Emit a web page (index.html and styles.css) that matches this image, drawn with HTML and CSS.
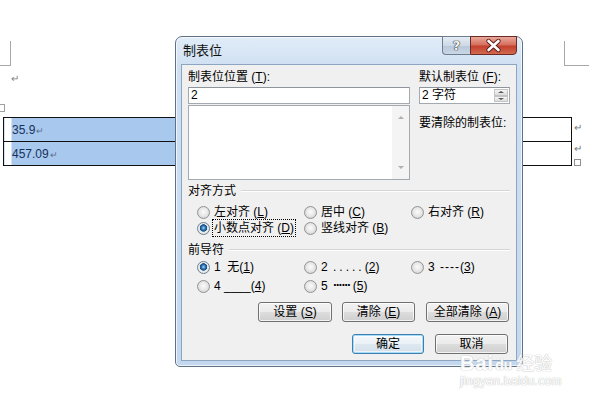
FILE: index.html
```html
<!DOCTYPE html>
<html lang="zh-CN">
<head>
<meta charset="UTF-8">
<title>制表位</title>
<link rel="stylesheet" href="styles.css">
</head>
<body>
<div class="screen">
  <!-- documento de fondo -->
  <div class="doc">
    <div class="marks">
      <span class="crop crop-left"></span>
      <span class="crop crop-right"></span>
    </div>
    <div class="para">↵</div>
    <div class="handle"></div>
    <div class="table-wrap">
      <table class="doc-table">
        <tr><td class="sel">35.9<i>↵</i></td><td></td></tr>
        <tr><td class="sel">457.09<i>↵</i></td><td></td></tr>
      </table>
      <div class="row-ends">
        <i>↵</i>
        <i>↵</i>
        <b class="resize"></b>
      </div>
    </div>
  </div>

  <!-- ventana de dialogo -->
  <div class="dialog">
    <div class="titlebar">
      <span class="title">制表位</span>
      <div class="caption-btns">
        <span class="btn-help">?</span>
        <span class="btn-close">
          <svg width="45" height="19" viewBox="0 0 45 19">
            <path d="M17.5 5 L27.5 14 M27.5 5 L17.5 14" stroke="#5a1d17" stroke-width="4.4" stroke-linecap="round"/>
            <path d="M17.5 5 L27.5 14 M27.5 5 L17.5 14" stroke="#fff" stroke-width="2.6" stroke-linecap="round"/>
          </svg>
        </span>
      </div>
    </div>
    <div class="client">
      <div class="top">
        <div class="col-left">
          <div class="label">制表位位置 (<u>T</u>):</div>
          <div class="input">2</div>
          <div class="listbox">
            <div class="scroll">
              <i class="arrow up"></i>
              <i class="arrow down"></i>
            </div>
          </div>
        </div>
        <div class="col-right">
          <div class="label">默认制表位 (<u>F</u>):</div>
          <div class="spin">
            <span class="spin-value">2 字符</span>
            <div class="spin-btns">
              <span><i class="arrow up"></i></span>
              <span><i class="arrow down"></i></span>
            </div>
          </div>
          <div class="label clear-label">要清除的制表位:</div>
        </div>
      </div>

      <div class="group">对齐方式</div>
      <div class="radios">
        <div class="radio">左对齐 (<u>L</u>)</div>
        <div class="radio">居中 (<u>C</u>)</div>
        <div class="radio">右对齐 (<u>R</u>)</div>
        <div class="radio on"><span class="focus">小数点对齐 (<u>D</u>)</span></div>
        <div class="radio">竖线对齐 (<u>B</u>)</div>
      </div>

      <div class="group group-leader">前导符</div>
      <div class="radios leaders">
        <div class="radio on">1&nbsp; 无(<u>1</u>)</div>
        <div class="radio">2 <span class="dots">.....</span>(<u>2</u>)</div>
        <div class="radio">3 <span class="dashes">----</span>(<u>3</u>)</div>
        <div class="radio">4 ____(<u>4</u>)</div>
        <div class="radio">5 <span class="mid">······</span>(<u>5</u>)</div>
      </div>

      <div class="btn-row">
        <button class="btn btn-set">设置 (<u>S</u>)</button>
        <button class="btn btn-clear">清除 (<u>E</u>)</button>
        <button class="btn btn-all">全部清除 (<u>A</u>)</button>
      </div>
      <div class="btn-row btn-row-ok">
        <button class="btn btn-ok">确定</button>
        <button class="btn btn-cancel">取消</button>
      </div>
    </div>
  </div>

  <!-- marca de agua -->
  <div class="watermark">
    <div class="wm-logo"><span class="wm-bai">Bai</span><span class="wm-du">du</span><span class="wm-cn">经验</span></div>
    <div class="wm-url">jingyan.baidu.com</div>
  </div>
</div>
</body>
</html>
```

FILE: styles.css
```css
body {
  margin: 0;
  background-color: #fff;
  font-family: 'Liberation Sans', 'Noto Sans CJK SC', sans-serif;
  font-size: 12px;
  color: #000;
}

.screen {
  position: relative;
  width: 600px;
  height: 400px;
  overflow: hidden;
  background-color: #fff;
}

/* ---- documento ---- */
.doc {
  padding-top: 41px;
}

.marks {
  display: flex;
  justify-content: space-between;
  padding-right: 11px;
}

.crop {
  height: 24px;
  border-bottom: 1px solid #a8a8a8;
}

.crop-left {
  width: 10px;
  border-right: 1px solid #a8a8a8;
}

.crop-right {
  width: 24px;
  border-left: 1px solid #a8a8a8;
}

.para {
  margin-top: 5px;
  padding-left: 11px;
  height: 16px;
  line-height: 16px;
  font-size: 10px;
  color: #808080;
}

.handle {
  margin-top: 17px;
  margin-left: -4px;
  width: 7px;
  height: 6px;
  border: 1px solid #a0a0a0;
}

.table-wrap {
  display: flex;
  margin-top: 5px;
  margin-left: 3px;
}

.doc-table {
  border-collapse: collapse;
  width: 569px;
}

.doc-table td {
  border: 1px solid #111;
  height: 20px;
  padding: 0;
}

.doc-table td.sel {
  width: 300px;
  padding-left: 8px;
  background: linear-gradient(to right, #fff 7px, #a8c8ee 7px);
  color: #16325c;
  font-size: 12px;
}

.doc-table td.sel i {
  font-style: normal;
  font-size: 9px;
  color: #5d6f8a;
  margin-left: 1px;
}

.row-ends {
  display: flex;
  flex-direction: column;
  padding-left: 2px;
}

.row-ends i {
  font-style: normal;
  font-size: 10px;
  color: #777;
  height: 21px;
  line-height: 21px;
}

.resize {
  width: 5px;
  height: 5px;
  border: 1px solid #909090;
}

/* ---- dialogo ---- */
.dialog {
  position: absolute;
  left: 175px;
  top: 36px;
  width: 348px;
  height: 331px;
  box-sizing: border-box;
  border: 1px solid #5f7185;
  border-radius: 7px 7px 5px 5px;
  background: linear-gradient(#e1ecf8 0, #cfe0f3 30px, #c3d8ef 100%);
  box-shadow: inset 0 0 0 1px rgba(255, 255, 255, 0.7);
  display: flex;
  flex-direction: column;
  padding: 0 5px 5px 5px;
}

.titlebar {
  height: 27px;
  display: flex;
  justify-content: space-between;
  align-items: flex-start;
}

.title {
  align-self: center;
  padding-left: 2px;
  line-height: 16px;
  margin-top: 1px;
  font-size: 13px;
  color: #111;
}

.caption-btns {
  display: flex;
  margin-top: -1px;
}

.btn-help {
  width: 28px;
  height: 19px;
  box-sizing: border-box;
  border: 1px solid #707d8c;
  border-right: none;
  border-radius: 0 0 0 4px;
  background: linear-gradient(#e4ecf5 0, #cdd9e6 50%, #b7c8da 51%, #c9d7e6 100%);
  text-align: center;
  font-family: 'DejaVu Sans', sans-serif;
  font-weight: bold;
  font-size: 13px;
  line-height: 18px;
  color: #f4f4f4;
  text-shadow: 0 0 1px #333, 0 0 1px #333, 0 0 1px #333;
}

.btn-close {
  width: 47px;
  height: 19px;
  box-sizing: border-box;
  border: 1px solid #6b2a22;
  border-radius: 0 0 4px 0;
  background: linear-gradient(#e9a99b 0, #d6705f 45%, #c2412f 55%, #d2694f 100%);
  display: flex;
  align-items: center;
  justify-content: center;
}

.btn-close svg {
  display: block;
}

.client {
  flex: 1;
  background-color: #f0f0f0;
  border: 1px solid #8da5c0;
  padding: 4px 6px 0 6px;
  line-height: 16px;
}

.top {
  display: flex;
  gap: 9px;
}

.col-left {
  width: 222px;
}

.col-right {
  width: 91px;
}

.label {
  height: 16px;
  white-space: nowrap;
}

.input {
  margin-top: 2px;
  height: 17px;
  box-sizing: border-box;
  border: 1px solid #a4a9b0;
  border-top-color: #8e949b;
  background-color: #fff;
  padding-left: 2px;
  line-height: 15px;
}

.listbox {
  margin-top: 1px;
  height: 75px;
  box-sizing: border-box;
  border: 1px solid #a4a9b0;
  background-color: #fff;
  display: flex;
  justify-content: flex-end;
}

.scroll {
  width: 17px;
  background-color: #f4f4f4;
  display: flex;
  flex-direction: column;
  justify-content: space-between;
  align-items: center;
  padding: 10px 0 10px 0;
}

.arrow {
  width: 0;
  height: 0;
  border-left: 3px solid transparent;
  border-right: 3px solid transparent;
}

.arrow.up {
  border-bottom: 3px solid #b0b0b0;
}

.arrow.down {
  border-top: 3px solid #b0b0b0;
}

.spin {
  margin-top: 2px;
  height: 17px;
  box-sizing: border-box;
  border: 1px solid #a4a9b0;
  border-top-color: #8e949b;
  background-color: #fff;
  display: flex;
  justify-content: space-between;
}

.spin-value {
  padding-left: 2px;
  line-height: 15px;
}

.spin-btns {
  width: 14px;
  display: flex;
  flex-direction: column;
  padding: 1px;
}

.spin-btns span {
  flex: 1;
  border: 1px solid #c4c4c4;
  background: linear-gradient(#f6f6f6, #dcdcdc);
  display: flex;
  align-items: center;
  justify-content: center;
}

.spin-btns .arrow.up {
  border-bottom-color: #555;
  border-bottom-width: 2px;
}

.spin-btns .arrow.down {
  border-top-color: #555;
  border-top-width: 2px;
}

.clear-label {
  margin-top: 11px;
}

.group {
  margin-top: 3px;
  height: 16px;
  display: flex;
  align-items: center;
}

.group::after {
  content: "";
  flex: 1;
  margin-left: 5px;
  border-top: 1px solid #d5d5d5;
  border-bottom: 1px solid #fff;
}

.group-leader {
  margin-top: 6px;
}

.radios {
  margin-top: 5px;
  padding-left: 9px;
  display: grid;
  grid-template-columns: 107px 107px 1fr;
}

.radios.leaders {
  margin-top: 1px;
  row-gap: 3px;
}

.radio {
  display: flex;
  align-items: center;
  height: 16px;
  white-space: pre;
}

.radio::before {
  content: "";
  flex: none;
  width: 13px;
  height: 13px;
  box-sizing: border-box;
  border-radius: 50%;
  border: 1px solid #939393;
  background: radial-gradient(circle at 50% 45%, #fbfbfb 0, #e9e9e9 45%, #c9c9c9 100%);
  margin-right: 4px;
}

.radio.on::before {
  border-color: #6f7f8f;
  background: radial-gradient(circle at 50% 45%, #a9d6f7 0, #2e74b5 2px, #184c7d 3.4px, #dde6ee 4px, #ececec 5px, #c9c9c9 100%);
}

.dots {
  letter-spacing: 3px;
  margin-left: 2px;
}

.dashes {
  letter-spacing: 1px;
  margin-left: 2px;
}

.mid {
  font-family: 'DejaVu Sans', sans-serif;
  font-size: 10px;
  font-weight: bold;
  letter-spacing: -1px;
  color: #000;
  margin: 0 3px 0 2px;
}

.focus {
  outline: 1px dotted #000;
  outline-offset: 0;
  padding: 0 1px;
  margin-left: -1px;
}

.btn-row {
  margin-top: 8px;
  display: flex;
  justify-content: flex-end;
  gap: 10px;
  padding-right: 1px;
}

.btn-row-ok {
  margin-top: 12px;
  gap: 11px;
  padding-right: 2px;
}

.btn {
  height: 20px;
  width: 74px;
  box-sizing: border-box;
  border: 1px solid #707070;
  border-radius: 3px;
  background: linear-gradient(#f2f2f2 0, #ebebeb 50%, #dddddd 51%, #cfcfcf 100%);
  box-shadow: inset 0 0 0 1px rgba(255, 255, 255, 0.75);
  font-family: 'Liberation Sans', 'Noto Sans CJK SC', sans-serif;
  font-size: 12px;
  line-height: 16px;
  color: #000;
  padding: 0;
  white-space: pre;
}

.btn-clear {
  width: 73px;
}

.btn-all {
  width: 83px;
  margin-left: 1px;
}

.btn-ok {
  width: 72px;
  border-color: #3c7fb1;
  background: linear-gradient(#f4f8fb 0, #eaf1f6 50%, #dde8f0 51%, #d4e0ea 100%);
  box-shadow: inset 0 0 0 1px #a6daf5, inset 0 0 0 2px rgba(255, 255, 255, 0.6);
}

.btn-cancel {
  width: 73px;
}

/* ---- marca de agua ---- */
.watermark {
  position: absolute;
  left: 460px;
  top: 353px;
  width: 110px;
  color: #fff;
  text-shadow: 0 0 1px #c8c8c8, 0 0 1px #c8c8c8, 0 0 1px #c8c8c8;
  opacity: 0.9;
}

.wm-logo {
  display: flex;
  align-items: baseline;
  height: 18px;
  line-height: 18px;
}

.wm-bai {
  font-family: 'Liberation Sans', sans-serif;
  font-weight: bold;
  font-size: 20px;
  letter-spacing: 1px;
}

.wm-du {
  font-family: 'Liberation Sans', sans-serif;
  font-weight: bold;
  font-size: 14px;
  margin-left: 1px;
}

.wm-cn {
  font-family: 'Noto Sans CJK SC', sans-serif;
  font-size: 18px;
  margin-left: 4px;
}

.wm-url {
  margin-top: 4px;
  font-family: 'Liberation Sans', sans-serif;
  font-size: 12px;
  line-height: 13px;
  letter-spacing: 0.3px;
}
```
